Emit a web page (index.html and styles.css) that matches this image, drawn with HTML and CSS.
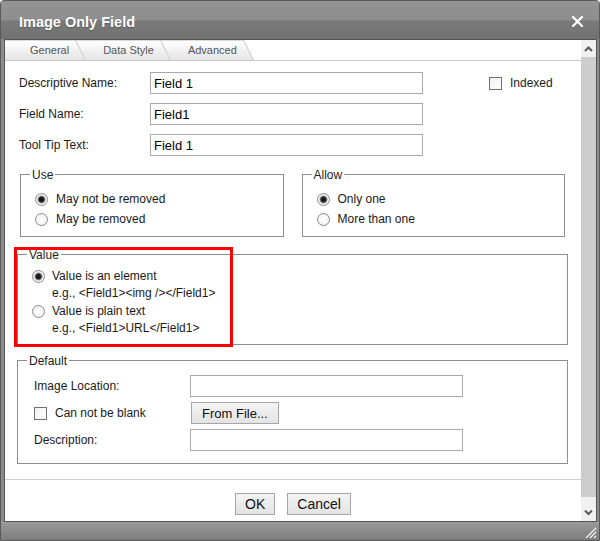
FILE: index.html
```html
<!DOCTYPE html>
<html lang="en">
<head>
<meta charset="UTF-8">
<link rel="stylesheet" href="styles.css">
<title>Image Only Field</title>
</head>
<body>
<div class="dialog">
<div class="titlebar">
<span class="title">Image Only Field</span>
<svg class="close" width="11" height="11" viewBox="0 0 11 11"><path d="M1 1L10 10M10 1L1 10" stroke="#fff" stroke-width="2.2" stroke-linecap="square"/></svg>
</div>
<div class="client">
<div class="panel">
<div class="tabs">
<div class="tab t1">General</div>
<div class="tab t2">Data Style</div>
<div class="tab t3">Advanced</div>
</div>
<div class="form">
<div class="fields">
<div class="row">
<label class="lbl">Descriptive Name:</label>
<input class="text" type="text" value="Field 1">
<label class="check indexed"><input type="checkbox">Indexed</label>
</div>
<div class="row">
<label class="lbl">Field Name:</label>
<input class="text" type="text" value="Field1">
</div>
<div class="row">
<label class="lbl">Tool Tip Text:</label>
<input class="text" type="text" value="Field 1">
</div>
</div>
<div class="pair">
<div class="group">
<div class="legend">Use</div>
<div class="opts">
<label class="opt"><input type="radio" name="use" checked>May not be removed</label>
<label class="opt"><input type="radio" name="use">May be removed</label>
</div>
</div>
<div class="group">
<div class="legend">Allow</div>
<div class="opts">
<label class="opt"><input type="radio" name="allow" checked>Only one</label>
<label class="opt"><input type="radio" name="allow">More than one</label>
</div>
</div>
</div>
<div class="group value">
<div class="legend">Value</div>
<div class="opts multi">
<label class="opt"><input type="radio" name="value" checked><span>Value is an element<br>e.g., &lt;Field1&gt;&lt;img /&gt;&lt;/Field1&gt;</span></label>
<label class="opt"><input type="radio" name="value"><span>Value is plain text<br>e.g., &lt;Field1&gt;URL&lt;/Field1&gt;</span></label>
</div>
<div class="mark"></div>
</div>
<div class="group default">
<div class="legend">Default</div>
<div class="drows">
<div class="row">
<label class="dlbl">Image Location:</label>
<input class="text" type="text">
</div>
<div class="row">
<label class="dlbl check"><input type="checkbox">Can not be blank</label>
<button class="btn small">From File...</button>
</div>
<div class="row">
<label class="dlbl">Description:</label>
<input class="text" type="text">
</div>
</div>
</div>
</div>
<div class="footer">
<button class="btn">OK</button>
<button class="btn">Cancel</button>
</div>
</div>
<div class="scrollbar">
<div class="sb-up"><svg width="15" height="17" viewBox="0 0 15 17"><polyline points="4,11 7.5,7.5 11,11" fill="none" stroke="#5a5a5a" stroke-width="2"/></svg></div>
<div class="thumb"></div>
<div class="sb-down"><svg width="15" height="17" viewBox="0 0 15 17"><polyline points="4,6.5 7.5,10 11,6.5" fill="none" stroke="#5a5a5a" stroke-width="2"/></svg></div>
</div>
</div>
<div class="statusbar">
<svg class="grip" width="13" height="13" viewBox="0 0 13 13"><path d="M12 2L2 12M12 6L6 12M12 10L10 12" stroke="#f2f2f2" stroke-width="1.3"/></svg>
</div>
</div>
</body>
</html>
```

FILE: styles.css
```css
html,
body {
margin: 0;
height: 100%;
overflow: hidden;
background: #fff;
}
body {
font-family: "Liberation Sans", Arial, sans-serif;
font-size: 12px;
color: #1a1a1a;
}
.dialog {
width: 600px;
height: 541px;
box-sizing: border-box;
border: 1px solid #5a5a5a;
border-radius: 4px 4px 0 0;
overflow: hidden;
background: #8c8c8c;
display: flex;
flex-direction: column;
}
.titlebar {
height: 38px;
flex: none;
display: flex;
align-items: center;
justify-content: space-between;
padding: 3px 16px 0 18px;
box-sizing: border-box;
background: linear-gradient(to bottom, #939393 0%, #8e8e8e 50%, #7a7a7a 52%, #717171 100%);
}
.title {
color: #fff;
font-weight: bold;
font-size: 14.5px;
text-shadow: 0 1px 1px rgba(0, 0, 0, 0.25);
}
.client {
flex: 1;
display: flex;
margin: 0 2px 0 3px;
border: 1px solid #555;
background: #fff;
min-height: 0;
}
.panel {
flex: 1;
display: flex;
flex-direction: column;
overflow: hidden;
}
.tabs {
display: flex;
height: 20px;
border-bottom: 1px solid #c8c8c8;
flex: none;
}
.tab {
position: relative;
height: 20px;
line-height: 20px;
padding: 0 17px;
font-size: 11px;
color: #555;
}
.tab::before {
content: '';
position: absolute;
left: 0;
top: 0;
right: 0;
bottom: 0;
box-sizing: border-box;
border-top: 1px solid #dadada;
border-right: 1px solid #c4c4c4;
background: linear-gradient(to bottom, #fff 0%, #e4e4e4 100%);
transform-origin: bottom left;
transform: skewX(27deg);
z-index: -1;
}
.t1 {
padding-left: 25px;
z-index: 3;
}
.t2 {
z-index: 2;
}
.t3 {
z-index: 1;
}
.form {
padding: 11px 13px 0 12px;
}
.fields {
margin-left: 2px;
display: flex;
flex-direction: column;
gap: 9px;
}
.row {
display: flex;
align-items: center;
height: 22px;
}
.lbl {
width: 131px;
flex: none;
}
.text {
width: 273px;
height: 22px;
box-sizing: border-box;
border: 1px solid #a9a9a9;
padding: 0 3px;
margin: 0;
font-family: "Liberation Sans", Arial, sans-serif;
font-size: 13px;
color: #000;
outline: none;
}
.check {
display: flex;
align-items: center;
gap: 8px;
}
.indexed {
margin-left: 66px;
}
input[type=checkbox] {
-webkit-appearance: none;
appearance: none;
width: 13px;
height: 13px;
margin: 0;
border: 1px solid #6f6f6f;
background: linear-gradient(135deg, #f0f0f0, #fff);
}
input[type=radio] {
-webkit-appearance: none;
appearance: none;
width: 13px;
height: 13px;
margin: 0;
flex: none;
border: 1px solid #8a8a8a;
border-radius: 50%;
background: radial-gradient(circle, #fff 0%, #ececec 100%);
}
input[type=radio]:checked {
background: radial-gradient(circle, #111 0, #222 2.4px, #9a9a9a 3.6px, #f2f2f2 4.4px, #fff 100%);
}
.pair {
display: flex;
gap: 18px;
margin: 18px 3px 0 3px;
}
.pair .group {
flex: 1;
}
.group {
border: 1px solid #8e8e8e;
position: relative;
}
.legend {
width: fit-content;
margin: -7px 0 0 9px;
padding: 0 2px;
line-height: 14px;
background: #fff;
color: #222;
}
.opts {
padding: 7px 0 7px 14px;
}
.opt {
display: flex;
align-items: center;
gap: 8px;
height: 20px;
}
.value {
margin-top: 17px;
}
.multi {
padding: 6px 0 7px 14px;
display: flex;
flex-direction: column;
gap: 1px;
}
.multi .opt {
height: auto;
align-items: flex-start;
line-height: 17px;
gap: 7px;
}
.multi input[type=radio] {
margin-top: 2px;
}
.mark {
position: absolute;
left: -4px;
top: -8px;
width: 219px;
height: 100px;
box-sizing: border-box;
border: 3px solid #f00;
pointer-events: none;
}
.default {
margin-top: 15px;
}
.drows {
padding: 7px 0 12px 16px;
display: flex;
flex-direction: column;
gap: 5px;
}
.dlbl {
width: 156px;
flex: none;
}
.btn {
height: 22px;
box-sizing: border-box;
margin: 0;
padding: 0 9px;
border: 1px solid #a6a6a6;
border-radius: 0;
background: linear-gradient(to bottom, #f4f4f4 0%, #e3e3e3 100%);
font-family: "Liberation Sans", Arial, sans-serif;
font-size: 14px;
color: #111;
}
.small {
font-size: 13px;
padding: 0 10px;
margin-left: 1px;
}
.footer {
margin-top: 15px;
border-top: 1px solid #cfcfcf;
padding: 13px 0 6px;
display: flex;
justify-content: center;
gap: 12px;
}
.scrollbar {
width: 15px;
flex: none;
display: flex;
flex-direction: column;
background: #f0f0f0;
}
.sb-up {
height: 17px;
}
.thumb {
flex: 1;
background: #cdcdcd;
}
.sb-down {
height: 17px;
padding-top: 7px;
}
.scrollbar svg {
display: block;
}
.statusbar {
height: 18px;
flex: none;
display: flex;
justify-content: flex-end;
align-items: flex-end;
padding: 0 2px 1px 0;
box-sizing: border-box;
background: linear-gradient(to bottom, #9b9b9b 0%, #7c7c7c 100%);
}
```
